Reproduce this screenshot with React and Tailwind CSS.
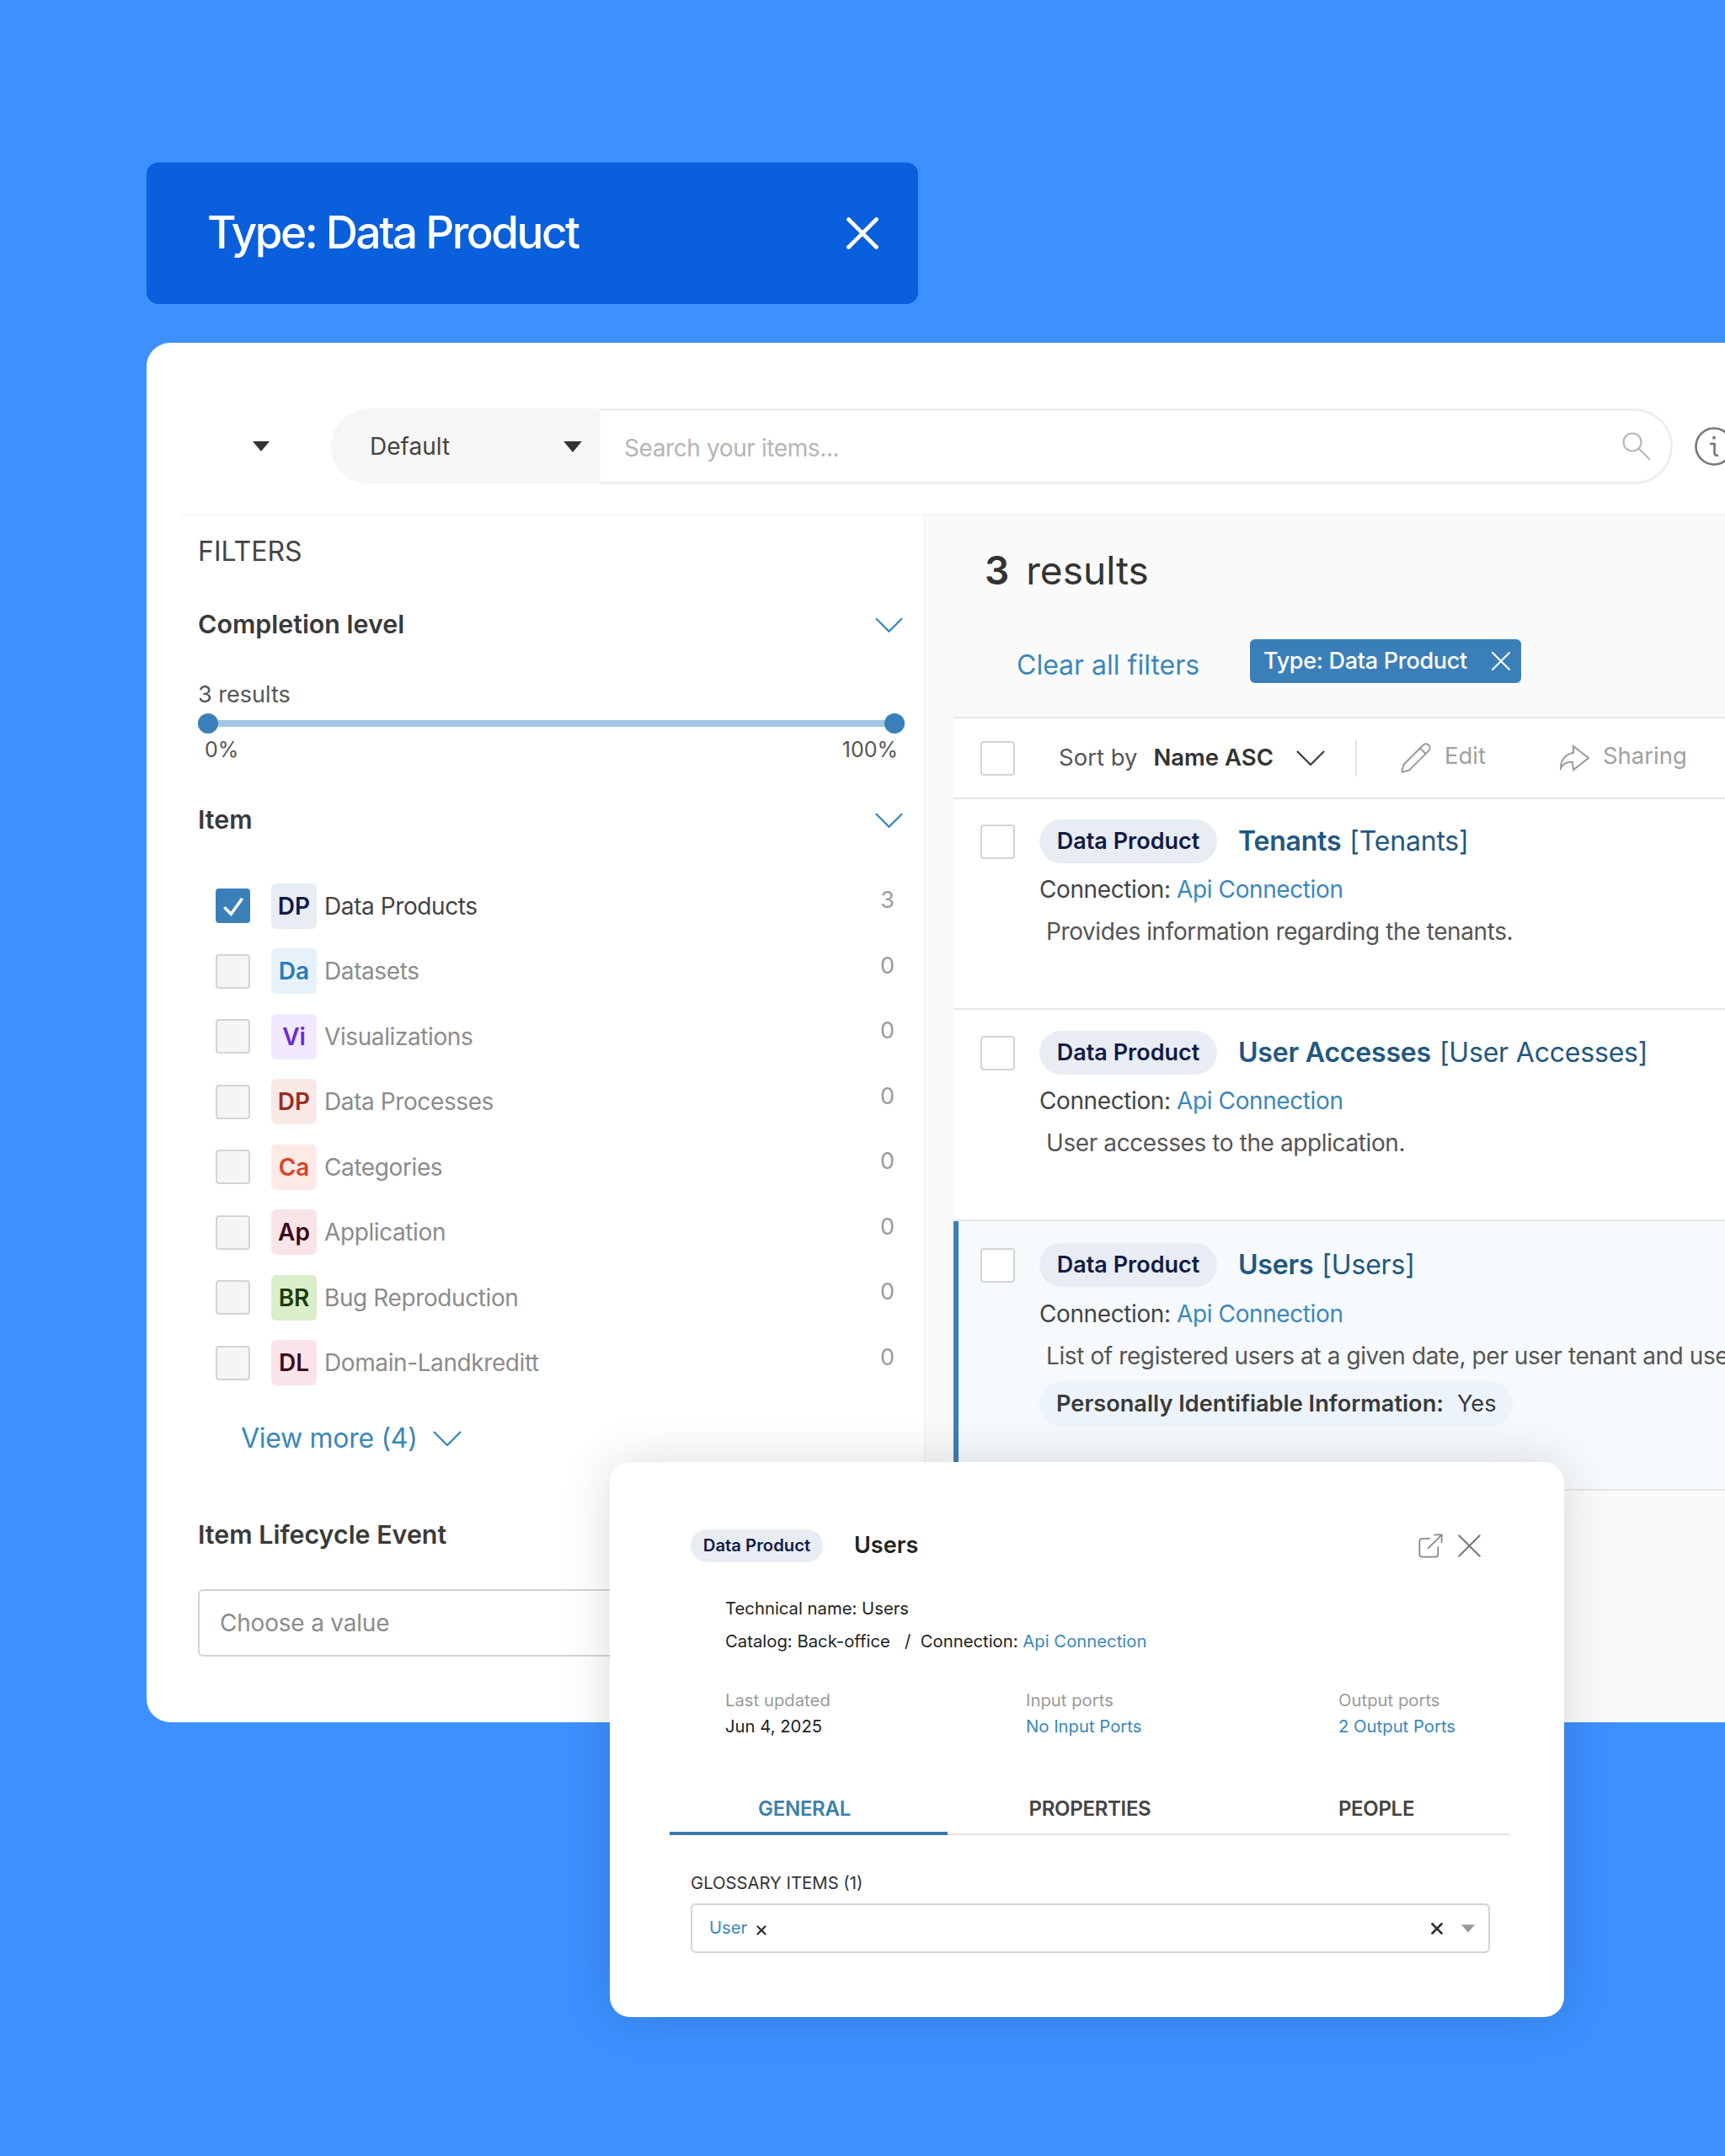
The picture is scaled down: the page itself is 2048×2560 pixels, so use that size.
import { ExternalLink, Pencil, X } from 'lucide-react'

const items = [
  { code: 'DP', label: 'Data Products', count: 3, badge: 'bg-[#e8ecf3] text-[#111b47]', checked: true },
  { code: 'Da', label: 'Datasets', count: 0, badge: 'bg-[#e6f1fa] text-[#2a7ab8]' },
  { code: 'Vi', label: 'Visualizations', count: 0, badge: 'bg-[#f1e9fd] text-[#6d28d9]' },
  { code: 'DP', label: 'Data Processes', count: 0, badge: 'bg-[#f8e9e7] text-[#9b2c1f]' },
  { code: 'Ca', label: 'Categories', count: 0, badge: 'bg-[#fdeae6] text-[#d4452a]' },
  { code: 'Ap', label: 'Application', count: 0, badge: 'bg-[#f9e4e8] text-[#3b0a1a]' },
  { code: 'BR', label: 'Bug Reproduction', count: 0, badge: 'bg-[#d9eec9] text-[#1a3d0a]' },
  { code: 'DL', label: 'Domain-Landkreditt', count: 0, badge: 'bg-[#fae4ea] text-[#3b0a22]' },
]

const Chevron = ({ className }) => (
  <svg viewBox="0 0 34 18" fill="none" stroke="currentColor" strokeWidth="2.4" className={className}>
    <path d="M1 1 L17 17 L33 1" />
  </svg>
)

const Caret = ({ className }) => (
  <svg viewBox="0 0 20 12" className={className}>
    <path d="M0 0 H20 L10 12 Z" fill="currentColor" />
  </svg>
)

const Checkbox = ({ muted }) => (
  <div className={`w-[41px] h-[41px] shrink-0 rounded-[4px] border-2 border-[#d4d4d4] ${muted ? 'bg-[#f5f5f5]' : 'bg-white'}`} />
)

const FilterRow = ({ item }) => (
  <div className="flex items-center h-[77.5px] pl-[21px]">
    {item.checked ? (
      <div className="w-[41px] h-[41px] shrink-0 rounded-[4px] bg-[#3b7fba] flex items-center justify-center">
        <svg viewBox="0 0 24 24" fill="none" stroke="white" strokeWidth="2.6" className="w-[32px] h-[32px]">
          <path d="M4 13 L10 19 L20 5" />
        </svg>
      </div>
    ) : (
      <Checkbox muted />
    )}
    <div className={`w-[54px] h-[54px] ml-[25px] shrink-0 rounded-[6px] flex items-center justify-center text-[28px] font-semibold ${item.badge}`}>
      {item.code}
    </div>
    <span className={`ml-[9px] text-[28px] tracking-[-0.4px] ${item.checked ? 'text-[#444444]' : 'text-[#8c8c8c]'}`}>{item.label}</span>
    <span className="ml-auto mr-[12px] -mt-[13px] text-[27px] text-[#9a9a9a]">{item.count}</span>
  </div>
)

const ResultRow = ({ name, selected, desc, height, top, active, children }) => (
  <div className={`${height} ${top} border-b-2 border-[#e6e6e6] ${active ? 'bg-[#f6fafd] border-l-[6px] border-l-[#3b7fba] pl-[26px]' : 'bg-white pl-[32px]'}`}>
    <div className="flex items-center h-[52px]">
      <Checkbox />
      <div className="ml-[29px] w-[211px] h-[52px] rounded-full bg-[#e8ecf3] flex items-center justify-center text-[27px] font-semibold text-[#111b47]">
        Data Product
      </div>
      <span className="ml-[25px] text-[32px] font-semibold tracking-[-0.2px] text-[#22587f]">{name}</span>
      <span className="ml-[10px] text-[32px] tracking-[-0.2px] text-[#22587f]">[{selected}]</span>
    </div>
    <div className="pl-[70px]">
      <div className={`${active ? 'mt-[12px]' : 'mt-[11px]'} h-[40px] leading-[40px] text-[28px] tracking-[-0.4px] text-[#444444] whitespace-nowrap`}>
        Connection: <span className="text-[#3b87bd]">Api Connection</span>
      </div>
      <div className="mt-[10px] pl-[8px] h-[40px] leading-[40px] text-[28px] tracking-[-0.4px] text-[#555555] whitespace-nowrap">{desc}</div>
      {children}
    </div>
  </div>
)

const App = () => {
  return (
    <div className="relative w-[2048px] h-[2560px] overflow-hidden bg-[#3d90ff] pt-[193px] pl-[174px] font-[Inter,sans-serif]">
      {/* Applied filter banner */}
      <div className="w-[916px] h-[168px] rounded-[14px] bg-[#0a5fdc] flex items-center justify-between pl-[72px] pr-[33px]">
        <span className="text-[53px] font-medium tracking-[-2.5px] text-white">Type: Data Product</span>
        <X className="w-[66px] h-[66px] text-white" strokeWidth={1.7} />
      </div>

      {/* Main card */}
      <div className="mt-[46px] w-[1874px] h-[1638px] rounded-l-[28px] bg-white overflow-hidden">
        <div className="flex items-center h-[90px] mt-[78px] mb-[35px]">
          <Caret className="ml-[126px] w-[20px] h-[12px] shrink-0 text-[#333333]" />
          <div className="ml-[73px] w-[320px] h-[90px] shrink-0 rounded-l-full bg-[#f6f6f6] flex items-center justify-between pl-[46px] pr-[22px]">
            <span className="text-[28px] text-[#444444]">Default</span>
            <Caret className="w-[22px] h-[13px] text-[#333333]" />
          </div>
          <div className="w-[1273px] h-[90px] shrink-0 rounded-r-full border-[3px] border-l-0 border-[#eeeeee] flex items-center justify-between pl-[28px] pr-[23px]">
            <span className="mt-[3px] text-[28px] tracking-[-0.4px] text-[#b5b5b5]">Search your items...</span>
            <svg viewBox="0 0 34 34" fill="none" stroke="#b8b8b8" strokeWidth="2.2" className="w-[34px] h-[34px]">
              <circle cx="12" cy="12" r="10.5" />
              <path d="M19.5 19.5 L33 33" />
            </svg>
          </div>
          <svg viewBox="0 0 46 46" fill="none" stroke="#777777" strokeWidth="2.6" className="ml-[26px] w-[46px] h-[46px] shrink-0">
            <circle cx="23" cy="23" r="21.5" />
            <path d="M18 20 H23.5 V31 Q23.5 34 28 34" />
            <path d="M23 11 V14.5" strokeWidth="3.4" />
          </svg>
        </div>

        <div className="flex h-[1435px]">
          {/* Filters */}
          <div className="ml-[41px] w-[882px] shrink-0 pl-[20px] pr-[23px] border-t-2 border-[#f5f5f5]">
            <div className="mt-[23px] h-[40px] leading-[40px] text-[32px] text-[#444444]">FILTERS</div>
            <div className="mt-[47px] h-[40px] flex items-center justify-between">
              <span className="text-[30.4px] font-semibold text-[#3a3a3a]">Completion level</span>
              <Chevron className="mr-[2px] w-[33px] h-[18px] text-[#3b87bd]" />
            </div>
            <div className="mt-[47px] h-[32px] leading-[32px] text-[27px] text-[#555555]">3 results</div>
            <div className="mt-[6px] h-[24px] relative flex items-center">
              <div className="w-full h-[8px] bg-[#a3c7e2]" />
              <div className="absolute left-0 w-[24px] h-[24px] rounded-full bg-[#3b7fba]" />
              <div className="absolute right-0 w-[24px] h-[24px] rounded-full bg-[#3b7fba]" />
            </div>
            <div className="mt-[6px] px-[8px] h-[26px] leading-[26px] flex justify-between text-[25px] text-[#555555]">
              <span>0%</span>
              <span>100%</span>
            </div>
            <div className="mt-[51px] h-[40px] flex items-center justify-between">
              <span className="text-[30.4px] font-semibold text-[#3a3a3a]">Item</span>
              <Chevron className="mr-[2px] w-[33px] h-[18px] text-[#3b87bd]" />
            </div>
            <div className="mt-[43px]">
              {items.map((item) => (
                <FilterRow key={item.label + item.code} item={item} />
              ))}
            </div>
            <div className="mt-[29px] pl-[51px] h-[44px] flex items-center text-[#3b87bd]">
              <span className="text-[32px] tracking-[-0.3px]">View more (4)</span>
              <Chevron className="ml-[18px] w-[34px] h-[18px]" />
            </div>
            <div className="mt-[72px] h-[40px] leading-[40px] text-[30.4px] font-semibold text-[#3a3a3a]">Item Lifecycle Event</div>
            <div className="mt-[45px] h-[80px] rounded-[6px] border-2 border-[#d4d4d4] flex items-center pl-[24px] text-[28px] tracking-[-0.2px] text-[#8c8c8c]">
              Choose a value
            </div>
          </div>

          {/* Results */}
          <div className="flex-1 min-w-0 bg-[#fafafa] border-t-2 border-[#f5f5f5] border-l-2 border-l-[#f5f5f5]">
            <div className="mt-[37px] pl-[70px] h-[56px] flex items-center gap-[20px] text-[#333333]">
              <span className="text-[46px] font-semibold">3</span>
              <span className="text-[46px]">results</span>
            </div>
            <div className="mt-[54px] pl-[108px] flex items-center">
              <span className="w-[277px] mt-[10px] leading-[38px] text-[32px] text-[#3b87bd]">Clear all filters</span>
              <div className="w-[322px] h-[52px] rounded-[6px] bg-[#3b7fba] flex items-center justify-between pl-[16px] pr-[4px] text-white">
                <span className="text-[27px] font-medium tracking-[-0.3px] whitespace-nowrap">Type: Data Product</span>
                <X className="w-[40px] h-[40px] shrink-0" strokeWidth={1.2} />
              </div>
            </div>
            <div className="mt-[40px] ml-[33px] h-[98px] bg-white border-y-2 border-[#e6e6e6] flex items-center pl-[32px] text-[27.5px]">
              <Checkbox />
              <span className="ml-[52px] text-[#555555]">Sort by</span>
              <span className="ml-[19px] font-semibold text-[#333333]">Name ASC</span>
              <Chevron className="ml-[27px] w-[34px] h-[18px] text-[#444444]" />
              <div className="ml-[36px] w-[2px] h-[44px] bg-[#e6e6e6]" />
              <Pencil className="ml-[50px] w-[40px] h-[40px] text-[#999999]" strokeWidth={1.2} />
              <span className="ml-[14px] -mt-[4px] text-[#a0a0a0]">Edit</span>
              <svg viewBox="0 0 36 32" fill="none" stroke="#999999" strokeWidth="2" className="ml-[87px] w-[36px] h-[32px]">
                <path d="M17 2 L35 16 L17 30 L16 21 C10 20 5 23 2 28 C2 18 8 11 17 10 Z" />
              </svg>
              <span className="ml-[16px] -mt-[4px] text-[#a0a0a0]">Sharing</span>
            </div>
            <div className="ml-[33px]">
              <ResultRow name="Tenants" selected="Tenants" desc="Provides information regarding the tenants." height="h-[250px]" top="pt-[24px]" />
              <ResultRow name="User Accesses" selected="User Accesses" desc="User accesses to the application." height="h-[251px]" top="pt-[25px]" />
              <ResultRow name="Users" selected="Users" desc="List of registered users at a given date, per user tenant and user type." height="h-[320px]" top="pt-[26px]" active>
                <div className="mt-[10px] w-[562px] h-[54px] rounded-full bg-[#ecf3fa] flex items-center pl-[20px] text-[27.2px] text-[#3a3a3a]">
                  <span className="font-semibold">Personally Identifiable Information:</span>
                  <span className="ml-[16px]">Yes</span>
                </div>
              </ResultRow>
            </div>
          </div>
        </div>
      </div>

      {/* Detail popover over the card */}
      <div className="absolute left-[724px] top-[1736px] w-[1133px] h-[659px] rounded-[24px] bg-white shadow-[0_0_60px_rgba(0,0,0,0.14)] pt-[80px]">
        <div className="flex items-center h-[39px] pl-[96px] pr-[88px]">
          <div className="w-[157px] h-[39px] rounded-full bg-[#e8ecf3] flex items-center justify-center text-[20.3px] font-semibold text-[#111b47]">
            Data Product
          </div>
          <span className="ml-[37px] text-[27px] font-semibold text-[#222222]">Users</span>
          <ExternalLink className="ml-auto w-[35px] h-[35px] text-[#888888]" strokeWidth={1.2} />
          <X className="ml-[4px] w-[49px] h-[49px] text-[#777777]" strokeWidth={1} />
        </div>
        <div className="pl-[137px] text-[20.3px] text-[#222222]">
          <div className="mt-[39px] h-[32px] leading-[32px]">Technical name: Users</div>
          <div className="mt-[7px] h-[32px] leading-[32px] whitespace-pre">
            Catalog: Back-office   /  Connection: <span className="text-[#3b87bd]">Api Connection</span>
          </div>
          <div className="mt-[38px] grid grid-cols-[357px_371px_1fr] leading-[31px]">
            <div>
              <div className="text-[#9a9a9a]">Last updated</div>
              <div>Jun 4, 2025</div>
            </div>
            <div>
              <div className="text-[#9a9a9a]">Input ports</div>
              <div className="text-[#3b87bd]">No Input Ports</div>
            </div>
            <div>
              <div className="text-[#9a9a9a]">Output ports</div>
              <div className="text-[#3b87bd]">2 Output Ports</div>
            </div>
          </div>
        </div>
        <div className="mt-[66px] ml-[71px] w-[998px] grid grid-cols-[330px_338px_330px] border-b-2 border-[#e5e5e5] text-[24px] font-semibold tracking-[-0.3px] text-center">
          <div className="h-[48px] leading-[34px] -mb-[2px] pr-[10px] border-b-4 border-[#3a78ad] text-[#3b7fad]">GENERAL</div>
          <div className="h-[46px] leading-[34px] text-[#444444]">PROPERTIES</div>
          <div className="h-[46px] leading-[34px] pl-[12px] text-[#444444]">PEOPLE</div>
        </div>
        <div className="mt-[43px] ml-[96px] h-[28px] leading-[28px] text-[20.3px] text-[#333333]">GLOSSARY ITEMS (1)</div>
        <div className="mt-[10px] ml-[96px] w-[949px] h-[59px] rounded-[6px] border-2 border-[#d4d4d4] flex items-center pl-[20px] pr-[16px]">
          <span className="text-[20.3px] text-[#3b87bd]">User</span>
          <X className="ml-[8px] mt-[4px] w-[18px] h-[18px] text-[#333333]" strokeWidth={3} />
          <X className="ml-auto w-[22px] h-[22px] text-[#333333]" strokeWidth={3} />
          <Caret className="ml-[18px] w-[16px] h-[10px] text-[#999999]" />
        </div>
      </div>
    </div>
  )
}

export default App
